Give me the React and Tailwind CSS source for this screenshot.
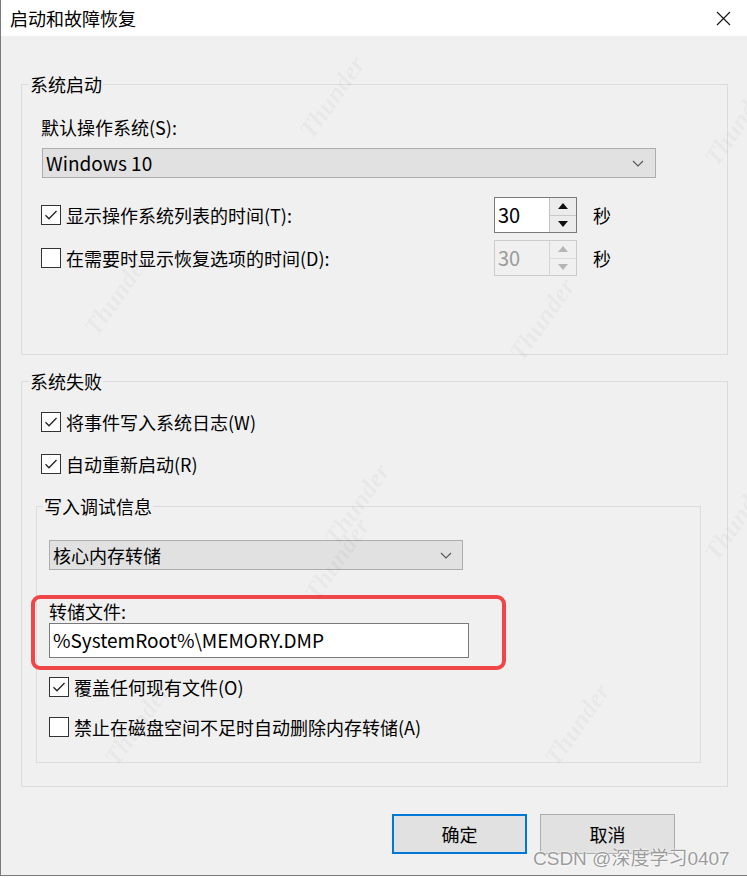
import React from 'react'

const FONT = { fontFamily: '"Noto Sans CJK SC", "Noto Sans", sans-serif' }

function Check({ checked }) {
  return (
    <span className="w-[20px] h-[20px] border border-[#333] bg-white flex items-center justify-center shrink-0">
      {checked && (
        <svg width="16" height="16" viewBox="0 0 16 16" fill="none" stroke="#222" strokeWidth="1.3">
          <path d="M2.5 8.3 L6 11.8 L13.5 4" />
        </svg>
      )}
    </span>
  )
}

function CheckRow({ checked, label, className = '' }) {
  return (
    <div className={`flex items-center h-[24px] ${className}`}>
      <Check checked={checked} />
      <span className="ml-[5px] text-[18px] leading-[24px] text-black whitespace-nowrap">{label}</span>
    </div>
  )
}

function Chevron() {
  return (
    <svg width="12" height="7" viewBox="0 0 12 7" fill="none" stroke="#555" strokeWidth="1.1">
      <path d="M1 1 L6 6 L11 1" />
    </svg>
  )
}

function Spin({ disabled }) {
  const arrow = disabled ? '#b5b5b5' : '#111'
  return (
    <div className={`flex h-[36px] w-[83px] border ${disabled ? 'border-[#cccccc]' : 'border-[#7a7a7a]'}`}>
      <div className={`flex-1 flex items-center pl-[3px] text-[20px] ${disabled ? 'bg-[#f0f0f0] text-[#9a9a9a]' : 'bg-white text-black'}`}>
        30
      </div>
      <div className={`w-[27px] flex flex-col border-l ${disabled ? 'border-[#d5d5d5]' : 'border-[#c2c2c2]'}`}>
        <div className={`flex-1 flex items-center justify-center border-b ${disabled ? 'bg-[#f0f0f0] border-[#dcdcdc]' : 'bg-[#ececec] border-[#c8c8c8]'}`}>
          <svg width="10" height="6" viewBox="0 0 10 6"><path d="M0 6 L5 0 L10 6 Z" fill={arrow} /></svg>
        </div>
        <div className={`flex-1 flex items-center justify-center ${disabled ? 'bg-[#f0f0f0]' : 'bg-[#ececec]'}`}>
          <svg width="10" height="6" viewBox="0 0 10 6"><path d="M0 0 L10 0 L5 6 Z" fill={arrow} /></svg>
        </div>
      </div>
    </div>
  )
}

function Watermark({ className }) {
  return (
    <span
      className={`absolute pointer-events-none text-[26px] italic font-bold text-black/[0.045] -rotate-[55deg] ${className}`}
      style={{ fontFamily: '"Liberation Serif", serif' }}
    >
      Thunder
    </span>
  )
}

export default function App() {
  return (
    <div className="w-[747px] h-[878px] bg-white overflow-hidden relative text-black" style={FONT}>
      <div className="h-[876px] border-l border-b border-[#7a7a7a] bg-[#f0f0f0] flex flex-col">
        {/* Title bar */}
        <div className="h-[36px] bg-white flex items-center justify-between pl-[9px] pr-[16px] shrink-0">
          <span className="text-[18px] leading-[24px]">启动和故障恢复</span>
          <svg width="15" height="15" viewBox="0 0 15 15" stroke="#111" strokeWidth="1.1">
            <path d="M1 1 L14 14 M14 1 L1 14" />
          </svg>
        </div>

        <div className="pl-[20px] pr-[19px] pt-[36px]">
          {/* 系统启动 */}
          <fieldset className="border border-[#dcdcdc] m-0 px-[19px] pb-[78px] pt-0 min-w-0">
            <legend className="-ml-[12px] px-[1px] text-[18px] leading-[24px]">系统启动</legend>
            <div className="mt-[19px] text-[18px] leading-[24px]">默认操作系统(S):</div>
            <div className="mt-[9px] ml-[1px] w-[614px] h-[30px] bg-[#e1e1e1] border border-[#adadad] flex items-center justify-between pl-[3px] pr-[11px]">
              <span className="text-[19px]">Windows 10</span>
              <Chevron />
            </div>
            <div className="mt-[19px] flex items-center h-[36px]">
              <div className="w-[453px]"><CheckRow checked label="显示操作系统列表的时间(T):" /></div>
              <Spin />
              <span className="ml-[16px] text-[18px]">秒</span>
            </div>
            <div className="mt-[7px] flex items-center h-[36px]">
              <div className="w-[453px]"><CheckRow label="在需要时显示恢复选项的时间(D):" /></div>
              <Spin disabled />
              <span className="ml-[16px] text-[18px]">秒</span>
            </div>
          </fieldset>

          {/* 系统失败 */}
          <fieldset className="mt-[14px] border border-[#dcdcdc] m-0 pl-[19px] pr-[26px] pb-[23px] pt-0 min-w-0">
            <legend className="-ml-[12px] px-[1px] text-[18px] leading-[24px]">系统失败</legend>
            <CheckRow checked label="将事件写入系统日志(W)" className="mt-[17px]" />
            <CheckRow checked label="自动重新启动(R)" className="mt-[18px]" />

            <fieldset className="mt-[18px] -ml-[5px] border border-[#dcdcdc] m-0 pl-[12px] pr-0 pb-[23px] pt-0 min-w-0">
              <legend className="-ml-[6px] px-[1px] text-[18px] leading-[24px]">写入调试信息</legend>
              <div className="mt-[22px] w-[414px] h-[30px] bg-[#e1e1e1] border border-[#adadad] flex items-center justify-between pl-[3px] pr-[10px]">
                <span className="text-[18px]">核心内存转储</span>
                <Chevron />
              </div>

              <div className="relative mt-[30px] w-[420px]">
                <div className="text-[18px] leading-[23px]">转储文件:</div>
                <div className="h-[35px] bg-white border border-[#7a7a7a] flex items-center pl-[3px] text-[19px]">
                  %SystemRoot%\MEMORY.DMP
                </div>
                <div className="absolute -left-[18px] -right-[37px] -top-[5px] -bottom-[12px] border-[4px] border-[#ef4747] rounded-[9px]" />
              </div>

              <CheckRow checked label="覆盖任何现有文件(O)" className="mt-[17px]" />
              <CheckRow label="禁止在磁盘空间不足时自动删除内存转储(A)" className="mt-[16px]" />
            </fieldset>
          </fieldset>

          {/* Buttons */}
          <div className="mt-[27px] flex justify-end gap-[13px] pr-[53px]">
            <button className="w-[135px] h-[40px] bg-[#e1e1e1] border-2 border-[#0078d7] text-[18px]">确定</button>
            <button className="w-[135px] h-[40px] bg-[#e1e1e1] border border-[#adadad] text-[18px]">取消</button>
          </div>
        </div>
      </div>

      <Watermark className="left-[285px] top-[78px]" />
      <Watermark className="left-[690px] top-[105px]" />
      <Watermark className="left-[70px] top-[275px]" />
      <Watermark className="left-[495px] top-[300px]" />
      <Watermark className="left-[310px] top-[485px]" />
      <Watermark className="left-[690px] top-[500px]" />
      <Watermark className="left-[290px] top-[540px]" />
      <Watermark className="left-[530px] top-[705px]" />
      <Watermark className="left-[90px] top-[705px]" />

      <span
        className="absolute left-[533px] top-[847px] text-[19px] leading-[24px] text-[#9c9c9c] whitespace-nowrap"
        style={{ fontFamily: '"Liberation Sans", "Noto Sans CJK SC", sans-serif', textShadow: '0 0 2px #fff, 0 0 2px #fff' }}
      >
        CSDN @深度学习0407
      </span>
    </div>
  )
}
